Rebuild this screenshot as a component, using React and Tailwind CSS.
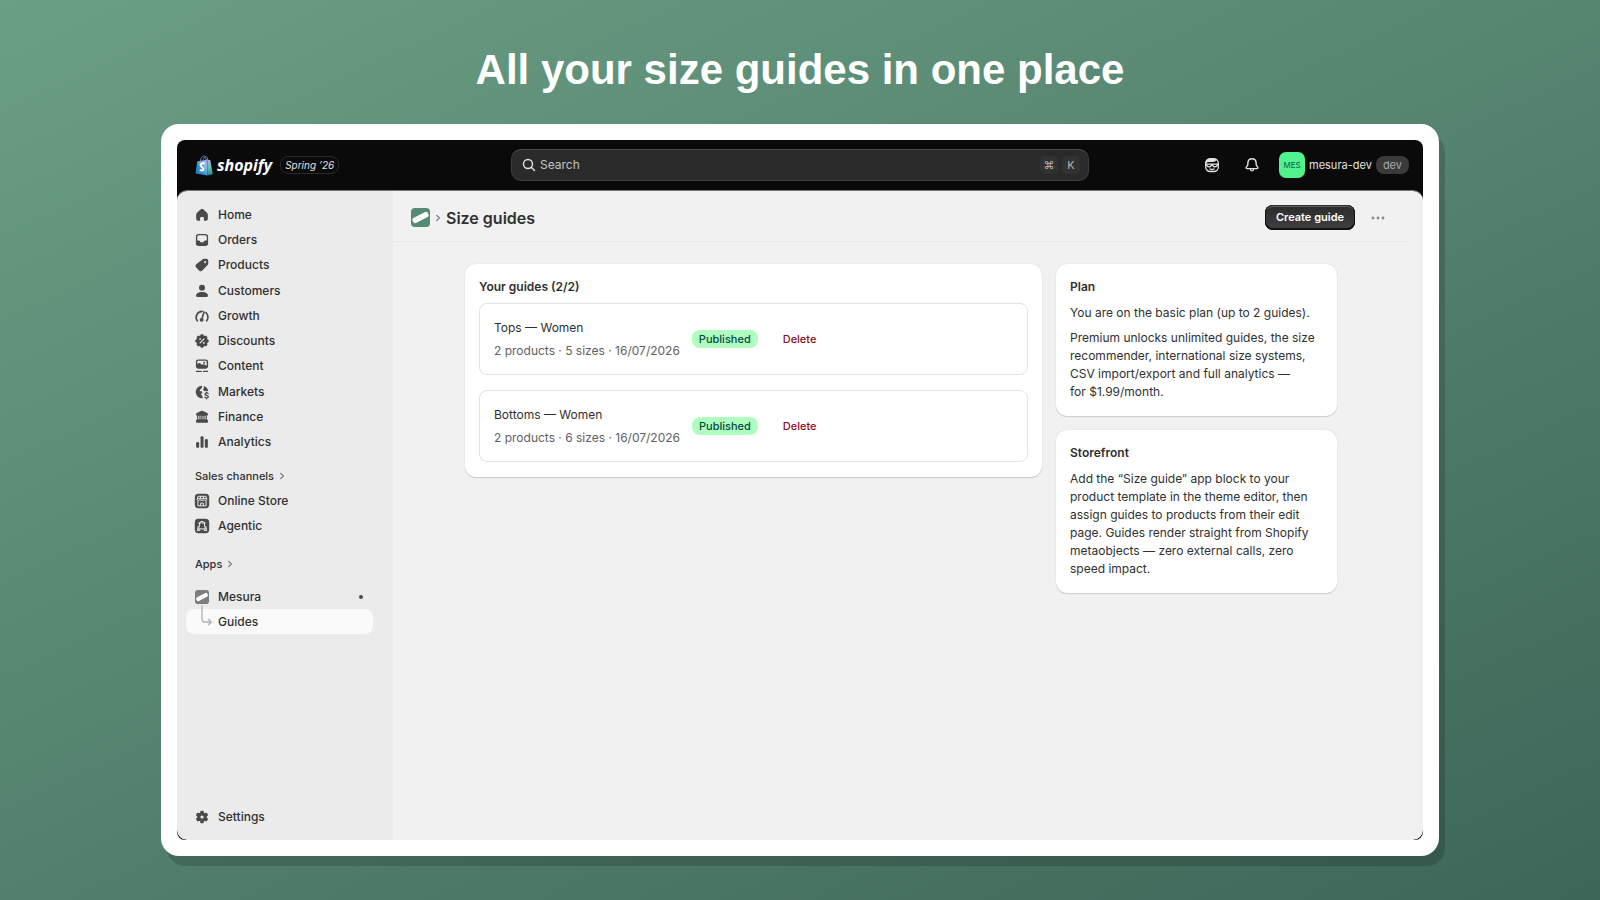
import React from "react";

const MAIN_NAV = [
  { label: "Home", icon: "home" },
  { label: "Orders", icon: "orders" },
  { label: "Products", icon: "products" },
  { label: "Customers", icon: "customers" },
  { label: "Growth", icon: "growth" },
  { label: "Discounts", icon: "discounts" },
  { label: "Content", icon: "content" },
  { label: "Markets", icon: "markets" },
  { label: "Finance", icon: "finance" },
  { label: "Analytics", icon: "analytics" },
];

const CHANNELS = [
  { label: "Online Store", icon: "store" },
  { label: "Agentic", icon: "agentic" },
];

const GUIDES = [
  { id: 1, name: "Tops — Women", meta: "2 products · 5 sizes · 16/07/2026" },
  { id: 2, name: "Bottoms — Women", meta: "2 products · 6 sizes · 16/07/2026" },
];

// Rounded teeth around a centre, used by the cog and the discount seal
const Teeth = ({ angles, width, top }) =>
  angles.map((angle) => (
    <rect
      key={angle}
      x={10 - width / 2}
      y={top}
      width={width}
      height="6"
      rx="1.2"
      transform={`rotate(${angle} 10 10)`}
    />
  ));

// All nav icons are drawn on a 20x20 grid
const ICONS = {
  home: (
    <path d="M8.7 3.6a1.9 1.9 0 0 1 2.6 0l4 3.7c.9.8 1.2 1.7 1.2 2.7v4.3a2.2 2.2 0 0 1-2.2 2.2h-1.2a1 1 0 0 1-1-1v-2.3a1 1 0 0 0-1-1H8.9a1 1 0 0 0-1 1v2.3a1 1 0 0 1-1 1H5.7a2.2 2.2 0 0 1-2.2-2.2V10c0-1 .3-1.900 1.200-2.700z" />
  ),
  orders: (
    <path
      fillRule="evenodd"
      d="M6.3 3.200h7.400a3.100 3.100 0 0 1 3.100 3.100v7.400a3.100 3.100 0 0 1-3.100 3.100H6.300a3.100 3.100 0 0 1-3.100-3.100V6.300a3.100 3.100 0 0 1 3.100-3.100zm.3 1.500c-1 0-1.900.8-1.900 1.900v3.900h1.600c.7 0 1.200.4 1.500 1l.2.5c.2.4.5.6.9.6h2.200c.4 0 .7-.2.9-.6l.2-.5c.3-.6.8-1 1.500-1h1.600V6.600c0-1.100-.8-1.900-1.900-1.900z"
    />
  ),
  products: (
    <path
      fillRule="evenodd"
      d="M10.900 3.500c.6-.4 1.200-.5 1.900-.5h1.700A2.500 2.500 0 0 1 17 5.500v2.300c0 .8-.3 1.500-.8 2.100l-5.500 6a2.800 2.800 0 0 1-4 .1l-2.900-2.900a2.800 2.800 0 0 1 .1-4.100zM13.500 8a1.200 1.200 0 1 0 0-2.400 1.200 1.200 0 0 0 0 2.400z"
    />
  ),
  customers: (
    <>
      <circle cx="10" cy="6.3" r="3.3" />
      <path d="M3.400 15c0-2.300 3-3.900 6.600-3.900s6.600 1.600 6.600 3.900c0 1.100-.8 1.700-1.800 1.700H5.200c-1 0-1.800-.6-1.800-1.700z" />
    </>
  ),
  growth: (
    <g fill="none" stroke="currentColor" strokeWidth="1.8" strokeLinecap="round">
      <path d="M4.800 15.400a6.700 6.700 0 0 1 5.400-10.600M14.300 6.200a6.700 6.700 0 0 1 .9 9.200" />
      <path d="M12.300 5.500 9.900 13" />
      <circle cx="9.600" cy="14.300" r="1.300" />
    </g>
  ),
  discounts: (
    <>
      <circle cx="10" cy="10" r="6.4" />
      <Teeth angles={[0, 45, 90, 135, 180, 225, 270, 315]} width={3.6} top={2.6} />
      <path d="m7.900 12.100 4.200-4.200" stroke="#ebebeb" strokeWidth="1.4" strokeLinecap="round" />
      <circle cx="7.900" cy="7.900" r="1" fill="#ebebeb" />
      <circle cx="12.100" cy="12.100" r="1" fill="#ebebeb" />
    </>
  ),
  content: (
    <>
      <path
        fillRule="evenodd"
        d="M5.800 2.800h8.400a2.600 2.600 0 0 1 2.600 2.600v5a2.600 2.600 0 0 1-2.600 2.600H5.800a2.600 2.600 0 0 1-2.600-2.600v-5a2.600 2.600 0 0 1 2.600-2.600zm.2 1.500c-.7 0-1.300.6-1.300 1.300v2.200l1.500-.9c.6-.4 1.400-.3 1.900.2l1.700 1.500.9-.4c.6-.3 1.300-.2 1.800.1l2.700 1.300V5.600c0-.7-.6-1.300-1.300-1.300z"
      />
      <circle cx="12.400" cy="6.300" r="1.100" />
      <path d="M4 16h5M11.800 16H16" stroke="currentColor" strokeWidth="1.6" strokeLinecap="round" />
    </>
  ),
  markets: (
    <>
      <path d="M10 3a7 7 0 1 0 1.200 13.900c-.7-.7-1-1.500-.8-2.300l-1-1.200c-.5-.5-.5-1.200 0-1.700l1.200-1.100c-.3-.9-1-1.200-2-1.300-1.200-.1-1.500-1-.8-1.800l1.700-1.700c.5-.5.7-1.600.5-2.800z" />
      <path d="M11.900 3.200A7 7 0 0 1 17 9.200c-1.300-.9-2.600-.8-3.600.1l-1.500-1c-.8-.6-.8-1.300-.2-2 .5-.6.600-2 .2-3.100z" />
      <path
        d="M16.800 11.900c-.4-.6-1-.8-1.700-.8-1 0-1.800.5-1.800 1.300 0 1.900 3.700.9 3.700 2.800 0 .9-.8 1.400-1.900 1.400-.9 0-1.600-.3-2-1M15.100 10.100v1M15.100 16.600v1"
        fill="none"
        stroke="currentColor"
        strokeWidth="1.4"
        strokeLinecap="round"
      />
    </>
  ),
  finance: (
    <path
      fillRule="evenodd"
      d="M8.900 3.300a2.200 2.200 0 0 1 2.200 0l4.700 2.300c1.400.7 1.200 2.900-.4 2.900v4.200c.8.200 1.300.9 1.300 1.700v.9c0 .6-.4 1-1 1H4.300a1 1 0 0 1-1-1v-.9c0-.8.5-1.500 1.300-1.700V8.500C3 8.500 2.800 6.300 4.200 5.600zM5.900 8.500v4.100h1.200V8.500zm2.500 0v4.100h.9V8.500zm2.300 0v4.100h.9V8.500zm2.200 0v4.100h1.200V8.500z"
    />
  ),
  analytics: (
    <>
      <rect x="3.500" y="10" width="3.300" height="6.500" rx="1.300" />
      <rect x="8.400" y="3.500" width="3.300" height="13" rx="1.300" />
      <rect x="13.200" y="6.800" width="3.300" height="9.700" rx="1.300" />
    </>
  ),
  store: (
    <>
      <rect x="2" y="2" width="16" height="16" rx="4" />
      <g fill="none" stroke="#ebebeb" strokeWidth="1.1" strokeLinejoin="round">
        <path d="M5.600 4.800h8.800l1 3.400a1.500 1.500 0 0 1-2.900.3 1.600 1.600 0 0 1-2.500.4 1.600 1.600 0 0 1-2.500-.4 1.500 1.500 0 0 1-2.900-.3zM5.500 10v5.400h9V10M8.500 15.300v-3h3v3M4.800 7.400h10.400M8.300 5v2.600M11.700 5v2.600" />
      </g>
    </>
  ),
  agentic: (
    <>
      <rect x="2" y="2" width="16" height="16" rx="4" />
      <g fill="none" stroke="#ebebeb" strokeWidth="1.1" strokeLinejoin="round" strokeLinecap="round">
        <path d="M7.600 6.600 8.600 5h2.800l1 1.600M6.300 6.600h7.400M7.200 6.800v3.400l-1.300 3h8.200l-1.300-3V6.800M5.800 10.300 4.800 15h2.700v-1.500M14.200 10.300l1 4.700h-2.700v-1.500" />
      </g>
    </>
  ),
  settings: (
    <>
      <circle cx="10" cy="10" r="5.200" />
      <Teeth angles={[0, 60, 120, 180, 240, 300]} width={4} top={3} />
      <circle cx="10" cy="10" r="1.800" fill="#ebebeb" />
    </>
  ),
};

const NavIcon = ({ name }) => (
  <svg viewBox="0 0 20 20" className="size-[18px] shrink-0 fill-current text-[#4a4a4a]" aria-hidden="true">
    {ICONS[name]}
  </svg>
);

const Chevron = () => (
  <svg
    viewBox="0 0 8 8"
    className="size-2 fill-none stroke-[#7a7a7a]"
    strokeWidth="1.2"
    strokeLinecap="round"
    strokeLinejoin="round"
    aria-hidden="true"
  >
    <path d="M2.700 1.300 5.400 4 2.700 6.700" />
  </svg>
);

// Mesura mark: a ruler lying across a rounded square
const MesuraMark = ({ className, color }) => (
  <svg viewBox="0 0 20 20" className={className} aria-hidden="true">
    <rect width="20" height="20" rx="4" fill={color} />
    <g transform="rotate(-27 10 10)">
      <rect x="1" y="7" width="18" height="6" rx="2.600" fill="#fff" />
      <path d="M5 7v1.500M8.300 7v1.500M11.700 7v1.500M15 7v1.500" stroke={color} strokeOpacity=".4" strokeWidth=".7" />
      <circle cx="10" cy="10.400" r=".6" fill={color} fillOpacity=".6" />
    </g>
  </svg>
);

const ShopifyBag = () => (
  <svg viewBox="0 0 18 21" className="h-[21px] w-[18px]" aria-hidden="true">
    <defs>
      <linearGradient id="bag" x1="0" y1="1" x2="1" y2="0">
        <stop offset="0" stopColor="#1d6fb8" />
        <stop offset=".4" stopColor="#2f8fd0" />
        <stop offset=".7" stopColor="#8fb4e8" />
        <stop offset="1" stopColor="#a99be0" />
      </linearGradient>
      <linearGradient id="bagSide" x1="0" y1="0" x2="0" y2="1">
        <stop offset="0" stopColor="#b6a8ee" />
        <stop offset=".5" stopColor="#5cc6a4" />
        <stop offset="1" stopColor="#2a7f9c" />
      </linearGradient>
    </defs>
    <path
      d="M5.200 6.200C5.700 3 7.300.9 8.900.9c1.400 0 2.200 1.900 2.400 4.800M8 5.800c.5-2.500 1.600-4.200 2.900-4.100 1.100.1 1.600 1.400 1.900 3.400"
      fill="none"
      stroke="#5d7fae"
      strokeWidth="1"
    />
    <path d="M2.200 6.400 12.400 4.600 12.500 20.600.5 18.400z" fill="url(#bag)" />
    <path d="M12.400 4.600 15.400 5.200 17.700 19.200 12.500 20.600z" fill="url(#bagSide)" />
    <path
      d="M9.900 8.600C8.300 7.700 5.700 8.100 5.600 10.300c0 2.200 3.100 2.300 2.900 4-.2 1.500-2.200 1.400-3.700.4"
      fill="none"
      stroke="#fff"
      strokeWidth="1.900"
    />
  </svg>
);

const TopBar = () => (
  <header className="grid h-[50px] grid-cols-[1fr_minmax(0,578px)_1fr] items-center">
    <div className="flex items-center pl-[18px] text-white">
      <ShopifyBag />
      <span className="ml-1 font-['Open_Sans',sans-serif] text-base leading-5 font-bold italic">shopify</span>
      <span className="ml-2 rounded-lg border border-[#2a2a2a] px-1 text-[10px] leading-4 italic text-[#e3e3e3]">
        Spring ’26
      </span>
    </div>

    <label className="flex h-8 items-center rounded-[10px] border border-[#3d3d3d] border-t-[#4d4d4d] bg-[#2a2a2a] pr-2 pl-[10px]">
      <svg
        viewBox="0 0 14 14"
        className="size-[14px] fill-none stroke-[#e3e3e3]"
        strokeWidth="1.4"
        strokeLinecap="round"
        aria-hidden="true"
      >
        <circle cx="6" cy="6" r="4.500" />
        <path d="m9.500 9.500 3 3" />
      </svg>
      <input
        type="text"
        placeholder="Search"
        aria-label="Search"
        className="ml-1 min-w-0 flex-1 bg-transparent text-xs text-[#e3e3e3] outline-none placeholder:text-[#c4c4c4]"
      />
      <kbd className="flex size-[18px] items-center justify-center rounded-[5px] bg-[#323232] font-[Inter,'DejaVu_Sans',sans-serif] text-[11px] text-[#b5b5b5]">
        ⌘
      </kbd>
      <kbd className="ml-1 flex size-[18px] items-center justify-center rounded-[5px] bg-[#323232] font-[Inter,sans-serif] text-[11px] text-[#b5b5b5]">
        K
      </kbd>
    </label>

    <div className="flex items-center justify-end pr-[14px] text-[#e3e3e3]">
      <button type="button" aria-label="Sidekick" className="mr-6">
        <svg
          viewBox="0 0 16 16"
          className="size-4 fill-none stroke-current"
          strokeWidth="1.3"
          strokeLinecap="round"
          strokeLinejoin="round"
        >
          <rect x="1.700" y="1.700" width="12.600" height="12.800" rx="4.500" />
          <path d="M2 5.200C3 2.800 5.200 1.700 8 1.700c2 0 3.200.5 4.200 1.400-1.700 1.600-3.700 1.200-5.200 1.100-2 0-3.500.2-5 1z" className="fill-current" />
          <path d="M2 7.200h12M2.200 7.400c.6 1.700 1.700 2.500 3 2.500 1.500 0 1.700-1.700 2.800-1.700s1.300 1.700 2.800 1.700c1.300 0 2.400-.8 3-2.500M5.900 12c1.200.6 3 .6 4.200 0" />
        </svg>
      </button>
      <button type="button" aria-label="Notifications" className="mr-[19px]">
        <svg
          viewBox="0 0 16 16"
          className="size-4 fill-none stroke-current"
          strokeWidth="1.4"
          strokeLinecap="round"
          strokeLinejoin="round"
        >
          <path d="M8 1.800c-2.400 0-4 1.700-4.100 4L3.800 7.500c0 .6-.3 1.100-.7 1.600l-.8 1c-.4.600-.1 1.500.7 1.500h10c.8 0 1.100-.9.700-1.500l-.8-1c-.4-.5-.7-1-.7-1.600l-.1-1.700c-.1-2.300-1.700-4-4.100-4zM6.200 12c.2 1.200.9 1.900 1.800 1.900s1.600-.7 1.800-1.900" />
        </svg>
      </button>
      <button type="button" className="flex items-center text-[11px]">
        <span className="flex size-[26px] items-center justify-center rounded-[7px] bg-[#51f38d] text-[8px] text-[#0b5c48]">
          MES
        </span>
        <span className="ml-1">mesura-dev</span>
        <span className="ml-1 rounded-lg bg-[#3a3a3a] px-[7px] leading-[18px] text-[#a8a8a8]">dev</span>
      </button>
    </div>
  </header>
);

const NavLink = ({ icon, label }) => (
  <a href="#" className="flex items-center gap-[7px] pl-4">
    <NavIcon name={icon} />
    {label}
  </a>
);

const Sidebar = () => (
  <aside className="flex w-[216px] shrink-0 flex-col bg-[#ebebeb] pt-[11px] text-xs font-[550] text-[#303030]">
    <nav className="grid h-[253px] auto-rows-fr">
      {MAIN_NAV.map((item) => (
        <NavLink key={item.label} {...item} />
      ))}
    </nav>

    <a href="#" className="mt-[11px] flex h-5 items-center gap-1 pl-[18px] text-[11px]">
      Sales channels <Chevron />
    </a>
    <nav className="mt-[2px] grid h-[50px] auto-rows-fr">
      {CHANNELS.map((item) => (
        <NavLink key={item.label} {...item} />
      ))}
    </nav>

    <a href="#" className="mt-4 flex h-5 items-center gap-1 pl-[18px] text-[11px]">
      Apps <Chevron />
    </a>
    <nav className="mt-[10px]">
      <a href="#" className="flex h-[25px] items-center pr-[30px] pl-[18px]">
        <MesuraMark className="mr-[9px] size-[14px]" color="#7d7d7d" />
        Mesura
        <span className="ml-auto size-1 rounded-full bg-[#4a4a4a]" />
      </a>
      <a
        href="#"
        aria-current="page"
        className="relative mr-5 ml-[9px] flex h-[25px] items-center rounded-lg bg-[#fafafa] pl-8"
      >
        <svg
          viewBox="0 0 12 22"
          className="absolute -top-1 left-[15px] h-[22px] w-3 fill-none stroke-[#b0b0b0]"
          strokeWidth="1.3"
          strokeLinecap="round"
          strokeLinejoin="round"
          aria-hidden="true"
        >
          <path d="M1 1v13a3 3 0 0 0 3 3h6M7.500 14.200 10.300 17l-2.800 2.800" />
        </svg>
        Guides
      </a>
    </nav>

    <div className="mt-auto grid pb-[11px]">
      <a href="#" className="flex h-[25px] items-center gap-[7px] pl-4">
        <NavIcon name="settings" />
        Settings
      </a>
    </div>
  </aside>
);

const Card = ({ title, children }) => (
  <section className="rounded-[11px] bg-white px-[14px] pt-[14px] pb-[15px] shadow-[0_1px_1px_rgba(0,0,0,0.14),0_0_1px_rgba(0,0,0,0.2)]">
    <h2 className="text-xs leading-[18px] font-semibold">{title}</h2>
    {children}
  </section>
);

const GuideRow = ({ guide }) => (
  <li className="flex h-[72px] items-center rounded-lg border border-[#e3e3e3] px-[14px]">
    <a href="#" className="flex flex-col gap-[5px] text-xs leading-[18px]">
      <span>{guide.name}</span>
      <span className="text-[#616161]">{guide.meta}</span>
    </a>
    <span className="ml-3 rounded-lg bg-[#affebf] px-[7px] text-[11px] leading-[18px] font-[550] text-[#014b40]">
      Published
    </span>
    <button type="button" className="ml-[25px] text-[11px] leading-[18px] font-[550] text-[#8e0b21]">
      Delete
    </button>
  </li>
);

const GuidesPage = () => (
  <main className="min-w-0 flex-1 bg-[#f1f1f1] pr-[14px]">
    <div className="flex h-[51px] items-center border-b border-[#e8e8e8] pt-[3px] pr-6 pl-[18px]">
      <MesuraMark className="size-[19px]" color="#568a72" />
      <span className="ml-1 flex">
        <Chevron />
      </span>
      <h1 className="ml-1 text-base font-semibold">Size guides</h1>
      <button
        type="button"
        className="ml-auto h-[25px] rounded-lg bg-linear-to-b from-[#2b2b2b] to-[#404040] px-[11px] text-[11px] font-semibold text-white shadow-[inset_0_-1px_0_1px_#111,inset_0_0_0_1px_#303030,inset_0_2px_0_#5c5c5c]"
      >
        Create guide
      </button>
      <button type="button" aria-label="More actions" className="ml-4">
        <svg viewBox="0 0 14 4" className="h-1 w-[14px] fill-[#8a8a8a]">
          <circle cx="2" cy="2" r="1.400" />
          <circle cx="7" cy="2" r="1.400" />
          <circle cx="12" cy="2" r="1.400" />
        </svg>
      </button>
    </div>

    <div className="mx-auto mt-[22px] grid max-w-[872px] grid-cols-[minmax(0,1fr)_281px] items-start gap-[14px]">
      <Card title="Your guides (2/2)">
        <ul className="mt-[7px] flex flex-col gap-[15px]">
          {GUIDES.map((guide) => (
            <GuideRow key={guide.id} guide={guide} />
          ))}
        </ul>
      </Card>

      <div className="flex flex-col gap-[14px]">
        <Card title="Plan">
          <p className="mt-2 text-xs leading-[18px]">You are on the basic plan (up to 2 guides).</p>
          <p className="mt-[7px] text-xs leading-[18px]">
            Premium unlocks unlimited guides, the size recommender, international size systems, CSV import/export and
            full analytics — for&nbsp;$1.99/month.
          </p>
        </Card>
        <Card title="Storefront">
          <p className="mt-2 text-xs leading-[18px]">
            Add the “Size guide” app block to your product template in the theme editor, then assign guides to products
            from their edit page. Guides render straight from Shopify metaobjects — zero external calls, zero speed
            impact.
          </p>
        </Card>
      </div>
    </div>
  </main>
);

export default function App() {
  return (
    <div className="flex min-h-screen flex-col items-center bg-[linear-gradient(155deg,#6b9f85,#3d6658)] px-[161px] pb-11 font-[Inter,sans-serif] text-[#303030]">
      <h1 className="mt-[45px] font-['Liberation_Sans',sans-serif] text-[42px] leading-[50px] font-bold text-white">
        All your size guides in one place
      </h1>
      <div className="mt-[29px] flex w-full flex-1 flex-col rounded-[18px] bg-white p-4 shadow-[6px_10px_0_rgba(0,0,0,0.16)]">
        <div className="flex flex-1 flex-col overflow-hidden rounded-lg bg-[#0a0a0a]">
          <TopBar />
          <div className="flex flex-1 overflow-hidden rounded-[10px] border-t border-[#777]">
            <Sidebar />
            <GuidesPage />
          </div>
        </div>
      </div>
    </div>
  );
}
